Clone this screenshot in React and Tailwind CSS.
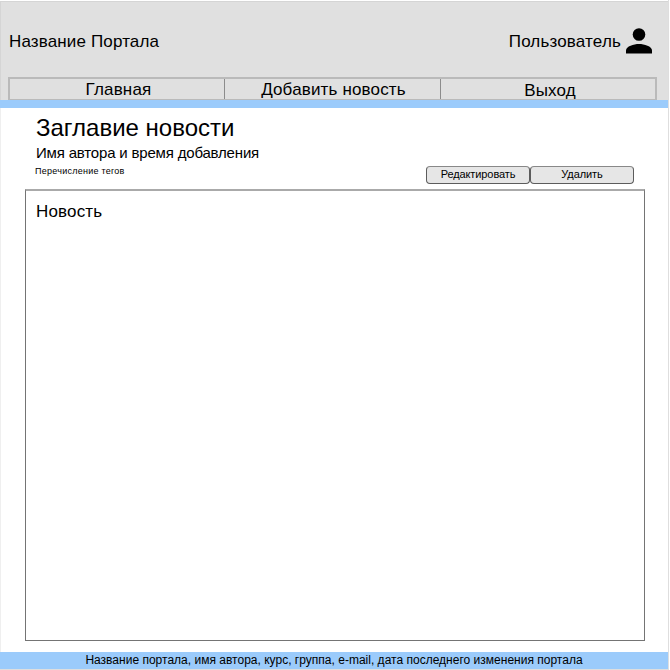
const tabs = [
  { label: 'Главная', cell: 'w-[215px] border-r pl-[3px] pt-px' },
  { label: 'Добавить новость', cell: 'w-[216px] border-r pl-[2px] pt-px' },
  { label: 'Выход', cell: 'w-[214px] pl-[4px] pt-[3px]' },
];

function UserIcon() {
  return (
    <svg className="ml-1 h-[26px] w-[26px]" viewBox="0 0 26 26" fill="#000">
      <circle cx="13" cy="6.5" r="6.3" />
      <path d="M0 25.6V22.2C0 18.2 7.8 15.9 13 15.9S26 18.2 26 22.2V25.6Z" />
    </svg>
  );
}

function Header() {
  return (
    <header className="flex h-[99px] shrink-0 flex-col border-l border-t border-[#d5d5d5] bg-[#e0e0e0] pl-[7px]">
      <div className="flex h-[75px] items-center justify-between pr-4 pt-[3px] text-[17px] leading-5">
        <span className="pl-px pt-px tracking-[0.14px]">Название Портала</span>
        <div className="flex items-center">
          <span className="mr-px pt-px tracking-[0.16px]">Пользователь</span>
          <UserIcon />
        </div>
      </div>
      <nav className="flex h-[23px] w-[649px] border-2 border-b border-[#bababa] text-[17px] leading-5 tracking-[0.16px]">
        {tabs.map(({ label, cell }) => (
          <div key={label} className={`flex items-center justify-center border-[#8c8c8c] ${cell}`}>
            {label}
          </div>
        ))}
      </nav>
    </header>
  );
}

const buttonStyle =
  'h-[18px] w-[104px] rounded-[4px] border border-[#5c5c5c] border-t-[#888] bg-[#e6e6e6] pb-[2px] leading-[14px] tracking-[-0.1px]';

export default function App() {
  return (
    <div className="h-[670px] w-[670px] overflow-hidden bg-white font-['Liberation_Sans',Arial,sans-serif] text-black">
      <div className="flex h-[670px] w-[669px] flex-col whitespace-nowrap border-b border-r border-[#dedede] pt-px">
        <Header />
        <div className="h-2 shrink-0 bg-[#9bcbfb]" />
        <main className="flex h-[544px] shrink-0 flex-col border-l border-[#efefef] pl-6 pr-[23px]">
          <div className="flex h-[81px] justify-between pl-[10px] pr-[11px]">
            <div>
              <h1 className="pl-px pt-[6px] text-[24px] leading-7">Заглавие новости</h1>
              <p className="pl-px pt-px text-[15px] leading-5 tracking-[-0.18px]">Имя автора и время добавления</p>
              <p className="text-[9px] leading-4 tracking-[0.25px]">Перечисление тегов</p>
            </div>
            <div className="flex pt-[58px] text-[11px]">
              <button className={buttonStyle}>Редактировать</button>
              <button className={buttonStyle}>Удалить</button>
            </div>
          </div>
          <article className="h-[452px] border border-t-2 border-[#747474] border-t-[#aaa] pl-[10px] pt-[11px] text-[17px] leading-5 tracking-[0.16px]">
            Новость
          </article>
        </main>
        <footer className="flex h-[17px] shrink-0 items-center justify-center bg-[#9bcbfb] pb-px text-[12px] leading-4 tracking-[0.01px]">
          Название портала, имя автора, курс, группа, e-mail, дата последнего изменения портала
        </footer>
      </div>
    </div>
  );
}
